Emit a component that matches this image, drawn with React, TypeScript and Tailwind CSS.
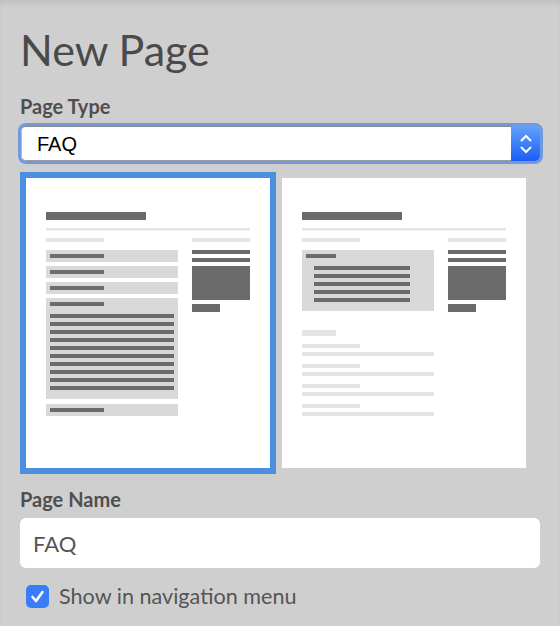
import React from "react";

const DARK = "#6b6b6b";
const BOX = "#d9d9d9";
const LIGHT = "#e4e4e4";

function Header() {
  return (
    <>
      <rect x="20" y="34" width="100" height="8" fill={DARK} />
      <rect x="20" y="50" width="204" height="2.5" fill={LIGHT} />
      <rect x="20" y="60" width="58" height="4" fill={LIGHT} />
      <rect x="166" y="60" width="58" height="4" fill={LIGHT} />
      <rect x="166" y="72" width="58" height="4" fill={DARK} />
      <rect x="166" y="80" width="58" height="4" fill={DARK} />
      <rect x="166" y="88" width="58" height="34" fill={DARK} />
      <rect x="166" y="126" width="28" height="8" fill={DARK} />
    </>
  );
}

function FaqThumb() {
  const rows = [72, 88, 104];
  const lines = Array.from({ length: 10 }, (_, i) => 136 + i * 8);
  return (
    <svg viewBox="0 0 244 290" className="w-[244px] h-[290px] block">
      <rect width="244" height="290" fill="white" />
      <Header />
      {rows.map((y) => (
        <g key={y}>
          <rect x="20" y={y} width="132" height="12" fill={BOX} />
          <rect x="24" y={y + 4} width="54" height="4" fill={DARK} />
        </g>
      ))}
      <rect x="20" y="120" width="132" height="101" fill={BOX} />
      <rect x="24" y="124" width="54" height="4" fill={DARK} />
      {lines.map((y) => (
        <rect key={y} x="24" y={y} width="124" height="4" fill={DARK} />
      ))}
      <rect x="20" y="226" width="132" height="12" fill={BOX} />
      <rect x="24" y="230" width="54" height="4" fill={DARK} />
    </svg>
  );
}

function PageThumb() {
  const lines = Array.from({ length: 5 }, (_, i) => 88 + i * 8);
  const pairs = [166, 186, 206, 226];
  return (
    <svg viewBox="0 0 244 290" className="w-[244px] h-[290px] block">
      <rect width="244" height="290" fill="white" />
      <Header />
      <rect x="20" y="72" width="132" height="61" fill={BOX} />
      <rect x="24" y="76" width="30" height="4" fill={DARK} />
      {lines.map((y) => (
        <rect key={y} x="32" y={y} width="96" height="4" fill={DARK} />
      ))}
      <rect x="20" y="152" width="34" height="6" fill={LIGHT} />
      {pairs.map((y) => (
        <g key={y}>
          <rect x="20" y={y} width="58" height="4" fill={LIGHT} />
          <rect x="20" y={y + 8} width="132" height="4" fill={LIGHT} />
        </g>
      ))}
    </svg>
  );
}

export default function App() {
  return (
    <div
      className="w-[560px] h-[626px] overflow-hidden bg-[#cfcfcf] shadow-[inset_0_5px_6px_-3px_rgba(0,0,0,0.1)] px-5"
      style={{ fontFamily: "Lato, 'Noto Sans', sans-serif" }}
    >
      <h1 className="pt-[25px] text-[43px] leading-[50px] text-[#4a4a4a] font-normal">New Page</h1>

      <div className="mt-[19px] text-[20px] leading-6 font-bold text-[#4f4f4f]">Page Type</div>

      <div className="mt-2 ml-px h-[35px] flex rounded-[5px] shadow-[0_0_0_3px_#7199de]">
        <div
          className="flex-1 flex items-center pl-[15px] bg-white border-y border-l border-t-[#8a8a8a] border-b-[#9a9a9a] border-l-[#bbbbbb] rounded-l-[5px] text-[20px] text-black"
          style={{ fontFamily: "'Liberation Sans', Arial, sans-serif" }}
        >
          FAQ
        </div>
        <div className="w-[29px] flex items-center justify-center rounded-r-[5px] bg-gradient-to-b from-[#64a0fa] to-[#1c5cf5]">
          <svg viewBox="0 0 14 22" className="w-[14px] h-[22px]" fill="none" stroke="white" strokeWidth="2">
            <polyline points="2,8 7,3 12,8" />
            <polyline points="2,14 7,19 12,14" />
          </svg>
        </div>
      </div>

      <div className="mt-[11px] flex">
        <div className="border-[6px] border-[#4a8fe0]">
          <FaqThumb />
        </div>
        <div className="border-[6px] border-transparent">
          <PageThumb />
        </div>
      </div>

      <div className="mt-[13px] text-[20px] leading-6 font-bold text-[#4f4f4f]">Page Name</div>

      <div className="mt-[7px] h-[50px] bg-white rounded-[6px] flex items-center pl-[13px] text-[22px] text-[#555]">
        FAQ
      </div>

      <label className="mt-4 ml-[6px] flex items-center gap-[10px] h-6">
        <span className="w-[23px] h-[23px] rounded-[5px] bg-[#3a7cf6] flex items-center justify-center">
          <svg viewBox="0 0 23 23" className="w-[23px] h-[23px]" fill="none" stroke="white" strokeWidth="2.6" strokeLinecap="round" strokeLinejoin="round">
            <polyline points="6.5,12 10,16 16.5,7" />
          </svg>
        </span>
        <span className="text-[21.6px] leading-6 text-[#555]">Show in navigation menu</span>
      </label>
    </div>
  );
}
